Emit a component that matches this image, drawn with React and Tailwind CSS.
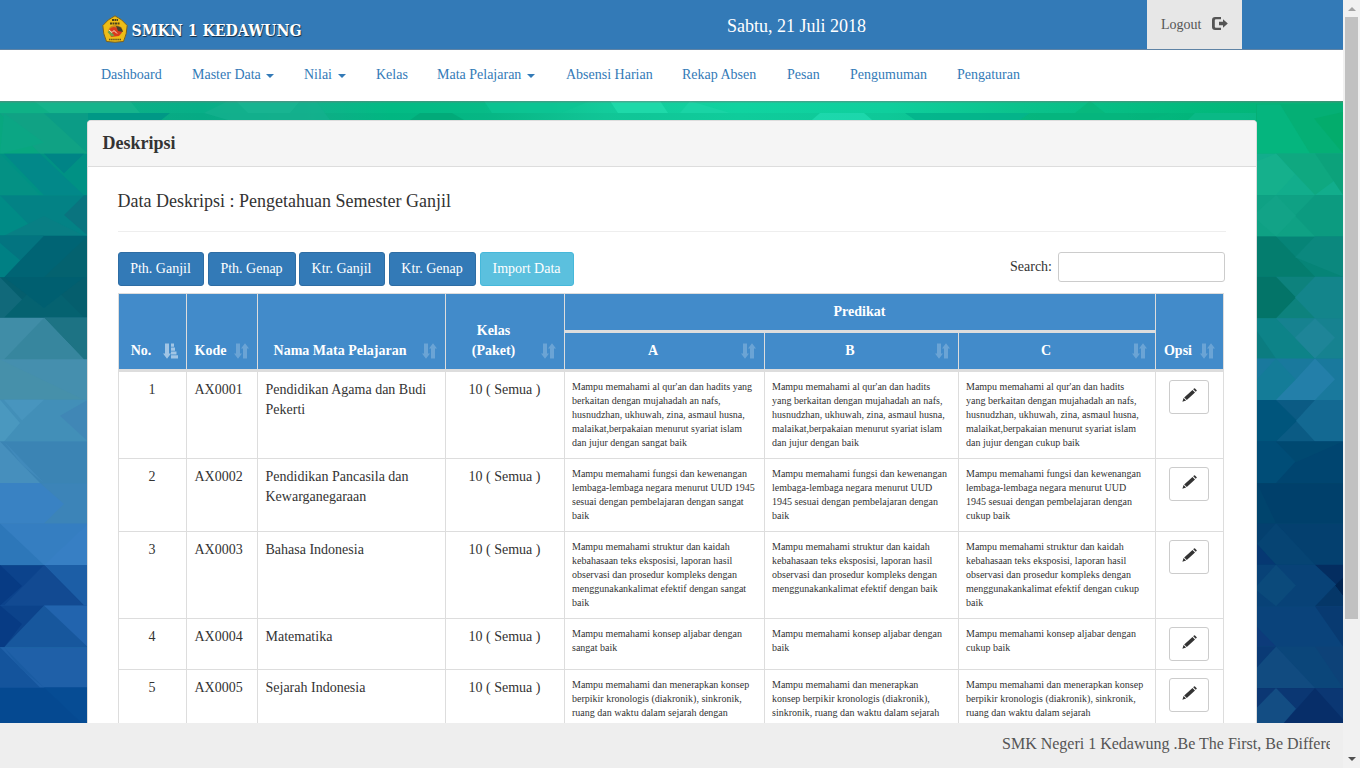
import React from 'react';

const NAV = [
  ['Dashboard', false, 'ml-[101px] w-[91px]'],
  ['Master Data', true, 'w-[112px]'],
  ['Nilai', true, 'w-[72px]'],
  ['Kelas', false, 'w-[61px]'],
  ['Mata Pelajaran', true, 'w-[129px]'],
  ['Absensi Harian', false, 'w-[116px]'],
  ['Rekap Absen', false, 'w-[105px]'],
  ['Pesan', false, 'w-[63px]'],
  ['Pengumuman', false, 'w-[107px]'],
  ['Pengaturan', false, 'w-[70px]'],
];

const BUTTONS = [
  ['Pth. Ganjil', 'w-[86px] bg-[#337ab7] border-[#2e6da4]'],
  ['Pth. Genap', 'w-[88px] bg-[#337ab7] border-[#2e6da4]'],
  ['Ktr. Ganjil', 'w-[86px] bg-[#337ab7] border-[#2e6da4] -ml-px'],
  ['Ktr. Genap', 'w-[87px] bg-[#337ab7] border-[#2e6da4]'],
  ['Import Data', 'w-[94px] bg-[#5bc0de] border-[#46b8da]'],
];

const ROWS = [
  {
    h: 'h-[88px]',
    code: 'AX0001',
    name: ['Pendidikan Agama dan Budi', 'Pekerti'],
    a: ["Mampu memahami al qur'an dan hadits yang", 'berkaitan dengan mujahadah an nafs,', 'husnudzhan, ukhuwah, zina, asmaul husna,', 'malaikat,berpakaian menurut syariat islam', 'dan jujur dengan sangat baik'],
    b: ["Mampu memahami al qur'an dan hadits", 'yang berkaitan dengan mujahadah an nafs,', 'husnudzhan, ukhuwah, zina, asmaul husna,', 'malaikat,berpakaian menurut syariat islam', 'dan jujur dengan baik'],
    c: ["Mampu memahami al qur'an dan hadits", 'yang berkaitan dengan mujahadah an nafs,', 'husnudzhan, ukhuwah, zina, asmaul husna,', 'malaikat,berpakaian menurut syariat islam', 'dan jujur dengan cukup baik'],
  },
  {
    h: 'h-[73px]',
    code: 'AX0002',
    name: ['Pendidikan Pancasila dan', 'Kewarganegaraan'],
    a: ['Mampu memahami fungsi dan kewenangan', 'lembaga-lembaga negara menurut UUD 1945', 'sesuai dengan pembelajaran dengan sangat', 'baik'],
    b: ['Mampu memahami fungsi dan kewenangan', 'lembaga-lembaga negara menurut UUD', '1945 sesuai dengan pembelajaran dengan', 'baik'],
    c: ['Mampu memahami fungsi dan kewenangan', 'lembaga-lembaga negara menurut UUD', '1945 sesuai dengan pembelajaran dengan', 'cukup baik'],
  },
  {
    h: 'h-[87px]',
    code: 'AX0003',
    name: ['Bahasa Indonesia'],
    a: ['Mampu memahami struktur dan kaidah', 'kebahasaan teks eksposisi, laporan hasil', 'observasi dan prosedur kompleks dengan', 'menggunakankalimat efektif dengan sangat', 'baik'],
    b: ['Mampu memahami struktur dan kaidah', 'kebahasaan teks eksposisi, laporan hasil', 'observasi dan prosedur kompleks dengan', 'menggunakankalimat efektif dengan baik'],
    c: ['Mampu memahami struktur dan kaidah', 'kebahasaan teks eksposisi, laporan hasil', 'observasi dan prosedur kompleks dengan', 'menggunakankalimat efektif dengan cukup', 'baik'],
  },
  {
    h: 'h-[51px]',
    code: 'AX0004',
    name: ['Matematika'],
    a: ['Mampu memahami konsep aljabar dengan', 'sangat baik'],
    b: ['Mampu memahami konsep aljabar dengan', 'baik'],
    c: ['Mampu memahami konsep aljabar dengan', 'cukup baik'],
  },
  {
    h: 'h-[87px]',
    code: 'AX0005',
    name: ['Sejarah Indonesia'],
    a: ['Mampu memahami dan menerapkan konsep', 'berpikir kronologis (diakronik), sinkronik,', 'ruang dan waktu dalam sejarah dengan'],
    b: ['Mampu memahami dan menerapkan', 'konsep berpikir kronologis (diakronik),', 'sinkronik, ruang dan waktu dalam sejarah'],
    c: ['Mampu memahami dan menerapkan konsep', 'berpikir kronologis (diakronik), sinkronik,', 'ruang dan waktu dalam sejarah'],
  },
];

/* Background facets: [top, height, base colour, [[points, colour], ...]] */
const LEFT = [
  [109, 33, '#10a284', [['0,109 0,142 40,142', '#08a77f'], ['44,109 88,109 88,142', '#0b9c86'], ['4,109 44,133 0,142', '#0ba684']]],
  [142, 34, '#009184', [['4,142 44,176 84,176 40,142', '#028889'], ['44,142 64,158 84,142', '#008486'], ['0,142 40,176 0,176', '#049184']]],
  [176, 33, '#038285', [['0,176 0,209 40,209', '#008b86'], ['84,176 64,192 88,209 88,176', '#0a747f'], ['44,193 4,209 84,209', '#087f84']]],
  [209, 34, '#006474', [['0,209 44,209 4,243 0,243', '#037480'], ['0,215 20,229 4,243 0,243', '#008084'], ['88,209 44,243 88,243', '#04626f']]],
  [243, 33, '#055e6d', [['0,243 0,276 40,276', '#11697a'], ['44,243 84,276 4,276', '#056270'], ['4,243 84,243 44,268', '#005f70']]],
  [276, 34, '#408da7', [['44,276 88,276 88,310 84,310', '#1d7384'], ['44,276 84,310 4,310', '#37869e']]],
  [310, 33, '#458fae', [['0,310 0,343 84,343', '#4690aa']]],
  [343, 34, '#428fb8', [['0,343 20,362 4,377 0,377', '#4a98bf'], ['88,343 60,356 88,377', '#4087b6'], ['4,343 44,343 22,360', '#4895be']]],
  [377, 34, '#3b84b4', [['0,377 0,411 40,411', '#468fbd'], ['4,377 44,411 22,396', '#418abb']]],
  [411, 33, '#3c84b8', [['0,411 40,411 64,428 44,444 0,444', '#3982c3']]],
  [444, 34, '#357ec1', [['0,444 0,478 44,478', '#2d77b9'], ['88,444 44,478 88,478', '#377fc4']]],
  [478, 33, '#0c438c', [['44,478 88,478 88,511 84,511', '#1c5ea6'], ['44,478 4,511 84,511', '#124a92'], ['0,478 22,495 0,511', '#073b84']]],
  [511, 34, '#17579d', [['0,511 44,511 4,545 0,545', '#0c438b'], ['0,511 22,526 4,545 0,545', '#073b84'], ['88,511 44,511 88,545', '#2264ae']]],
  [545, 33, '#1f60a8', [['0,545 0,578 40,578', '#14549c'], ['4,545 44,578 20,562', '#1a5ca3']]],
  [578, 34, '#054991', [['44,578 88,578 88,612', '#064c94']]],
];

const RIGHT = [
  [101, 38, '#05af75', [['1257,101 1280,101 1310,139 1257,139', '#05b57e'], ['1314,112 1343,107 1343,139', '#03ac6c']]],
  [139, 32, '#12ad8c', [['1276,139 1343,139 1343,155 1315,171', '#0fa880'], ['1315,139 1343,139 1343,171', '#0ca27b'], ['1257,145 1276,139 1295,155 1276,171 1257,171', '#15b08c']]],
  [171, 32, '#0fa184', [['1295,187 1315,171 1343,171 1343,203 1315,203', '#0c9b80'], ['1276,171 1296,187 1276,203 1257,190 1257,184', '#12a387']]],
  [203, 31, '#068477', [['1276,203 1315,234 1257,234 1257,203', '#047d6e'], ['1315,203 1343,203 1343,234 1295,219', '#0b887e']]],
  [234, 32, '#0d827d', [['1257,234 1276,234 1296,250 1276,266 1257,266', '#037468'], ['1315,234 1343,234 1343,266 1315,266 1295,250', '#13858b']]],
  [266, 31, '#0d8388', [['1276,266 1343,266 1343,297 1315,297', '#168290'], ['1315,266 1335,281 1315,297 1295,281', '#1e8598'], ['1257,276 1276,297 1257,297', '#0b7c80']]],
  [297, 32, '#19799d', [['1257,313 1276,297 1315,329 1257,329', '#147c98'], ['1315,297 1335,313 1315,329 1276,329 1296,313', '#237fa9']]],
  [329, 32, '#0b5b84', [['1257,329 1276,329 1297,345 1276,361 1257,361', '#00557c'], ['1315,329 1343,329 1343,361 1315,361 1296,345', '#136992']]],
  [361, 32, '#004570', [['1257,361 1276,361 1296,376 1276,393 1257,393', '#004d77'], ['1276,361 1343,361 1296,377', '#004971']]],
  [393, 31, '#00406b', [['1257,393 1276,424 1257,424', '#00446d']]],
  [424, 32, '#04406f', [['1276,424 1315,456 1276,456 1257,440', '#064473'], ['1257,440 1276,456 1257,456', '#063872']]],
  [456, 32, '#084277', [['1315,456 1343,456 1343,476', '#042d60'], ['1257,472 1276,456 1296,472 1276,488 1257,476', '#0b4a7b'], ['1335,472 1343,466 1343,480', '#002450'], ['1315,488 1335,472 1343,480 1343,488', '#053768']]],
  [488, 31, '#0a437b', [['1315,488 1343,488 1343,519', '#083a71'], ['1257,504 1257,519 1276,519', '#0d3b7a']]],
  [519, 32, '#0b467a', [['1257,535 1276,519 1315,551 1257,551', '#114b80'], ['1257,519 1276,519 1257,535', '#0a3a75'], ['1315,519 1343,519 1343,551', '#0d4278']]],
  [551, 34, '#0b3773', [['1257,566 1276,551 1296,567 1276,585 1257,578', '#134d83'], ['1315,551 1343,575 1343,585 1276,585', '#072e69']]],
];

const TOP = [
  ['0,0 34,0 50,12 0,12', '#0fb186'],
  ['34,0 130,0 140,12 50,12', '#18b58d'],
  ['228,0 204,12 228,19 330,19 316,0', '#14b08d'],
  ['236,0 300,0 290,12 248,12', '#1ab592'],
  ['420,12 452,12 464,19 410,19', '#02a877'],
  ['484,0 492,12 560,12 590,0', '#0dc493'],
  ['610,0 660,0 668,12 618,12', '#22dcad'],
  ['690,0 730,12 680,12', '#1cd5a6'],
  ['820,12 864,12 872,19 812,19', '#20dbb0'],
  ['905,12 1030,12 1020,19 915,19', '#02b18b'],
  ['1030,12 1170,12 1150,19 1020,19', '#05b47c'],
  ['1090,0 1105,12 1075,12', '#08b67a'],
  ['1195,12 1257,12 1257,19 1188,19', '#0dba89'],
];

function Facets({ rows, x, w }) {
  return rows.map(([y, h, fill, tris]) => (
    <g key={y}>
      <rect x={x} y={y} width={w} height={h + 0.5} fill={fill} />
      {tris.map(([points, color]) => (
        <polygon key={points} points={points} fill={color} />
      ))}
    </g>
  ));
}

function Backdrop() {
  return (
    <svg className="absolute inset-0 h-full w-full" viewBox="0 0 1343 622" preserveAspectRatio="none">
      <defs>
        <linearGradient id="top" x1="0" x2="1343" y1="0" y2="0" gradientUnits="userSpaceOnUse">
          <stop offset="0" stopColor="#12b188" />
          <stop offset="0.15" stopColor="#07af87" />
          <stop offset="0.22" stopColor="#13b08c" />
          <stop offset="0.29" stopColor="#02bb84" />
          <stop offset="0.36" stopColor="#07bb87" />
          <stop offset="0.45" stopColor="#13cb9b" />
          <stop offset="0.55" stopColor="#10d3a0" />
          <stop offset="0.66" stopColor="#0fcf9d" />
          <stop offset="0.76" stopColor="#0bc28c" />
          <stop offset="0.9" stopColor="#02b97c" />
          <stop offset="1" stopColor="#05b074" />
        </linearGradient>
      </defs>
      <rect width="1343" height="622" fill="url(#top)" />
      <rect y="12" width="1257" height="8" fill="#006a50" fillOpacity="0.06" />
      <polygon points="85,12 170,12 160,20 85,20" fill="#009886" />
      {TOP.map(([points, color]) => (
        <polygon key={points} points={points} fill={color} fillOpacity="0.8" />
      ))}
      <g transform="translate(0,-11) scale(1,1.2245) translate(0,-90)">
        <Facets rows={LEFT} x={0} w={88} />
      </g>
      <g transform="translate(0,-11) scale(1,1.2972) translate(0,-90)">
        <Facets rows={RIGHT} x={1256} w={87} />
      </g>
    </svg>
  );
}

function SortIcon() {
  return (
    <svg className="absolute right-[8px] bottom-[10px] h-[16px] w-[15px]" viewBox="0 0 15 16" fill="#fff" fillOpacity="0.22">
      <path d="M2 .5h4v10h2L4 15.700 0 10.500h2z" />
      <path d="M9 15.500V5.500H7L11 .3l4 5.200h-2v10z" />
    </svg>
  );
}

function SortAscIcon() {
  return (
    <svg className="absolute right-[8px] bottom-[10px] h-[16px] w-[15px]" viewBox="0 0 15 16" fill="#fff" fillOpacity="0.5">
      <path d="M2 .5h4v10h2L4 15.700 0 10.500h2z" />
      <path d="M8 .5h3v3.200H8zM8 4.500h4v3.200H8zM8 8.400h5.500v3.200H8zM8 12.300h7v3.200H8z" />
    </svg>
  );
}

function Pencil() {
  return (
    <svg className="h-[14px] w-[15px]" viewBox="0 0 15 14" fill="#333">
      <path d="M11.200 1.200 12 .4q.5-.5 1 0L14.500 2q.5.500 0 1l-.8.800zM10.500 1.900l2.500 2.600L4.800 12 2.200 9.400zM1.600 10.100l2.500 2.500L.4 13.800z" />
    </svg>
  );
}

function Crest() {
  return (
    <svg className="h-[28px] w-[26px] shrink-0" viewBox="0 0 26 28">
      <path d="M13 .8Q20 4 25.200 10.500 25 19 21.500 26.500 13 28 4.500 26.500 1 19 .8 10.500 6 4 13 .8z" fill="#eebd16" stroke="#745f25" strokeWidth="1" strokeLinejoin="round" />
      <path d="M10 5h6M8 8.500h10" stroke="#4c421c" strokeWidth="1.800" strokeDasharray="2 .5" />
      <ellipse cx="13.500" cy="15.500" rx="7" ry="5.500" fill="#c98a1c" />
      <path d="M7 15q3-5 8-2l5 4-3 4-8 1z" fill="#d93a1e" />
      <path d="M14 11q6 0 7 6l-5-1z" fill="#49402b" />
      <path d="m5.500 17 4 4.500 3-1-5-5z" fill="#6ea04a" />
      <path d="m7 15 3 2.500 2-2 3 3" fill="none" stroke="#fbe8cf" strokeWidth="1" />
      <path d="M7 24.500h12" stroke="#635321" strokeWidth="1.500" strokeDasharray="1.500 .6" />
    </svg>
  );
}

function Th({ children, className = '', icon, ...rest }) {
  return (
    <th {...rest} className={'relative border border-b-[3px] border-[#ddd] bg-[#428bca] px-0 pt-0 pb-[8px] text-center align-bottom leading-[20px] font-bold text-white ' + className}>
      {children}
      {icon}
    </th>
  );
}

function Desc({ lines }) {
  return (
    <td className="border border-[#ddd] p-0 pt-[8px] pl-[7px] align-top text-[10px] leading-[14px] whitespace-nowrap">
      {lines.map((l) => (
        <div key={l}>{l}</div>
      ))}
    </td>
  );
}

function Scrollbar() {
  return (
    <div className="flex w-[17px] shrink-0 flex-col items-center bg-[#f1f1f1]">
      <div className="flex h-[17px] items-center">
        <span className="h-0 w-0 border-x-4 border-b-4 border-x-transparent border-b-[#a3a3a3]" />
      </div>
      <div className="h-[602px] w-[13px] bg-[#c1c1c1]" />
      <div className="mt-auto flex h-[19px] items-center">
        <span className="h-0 w-0 border-x-4 border-t-4 border-x-transparent border-t-[#505050]" />
      </div>
    </div>
  );
}

function DescriptionTable() {
  return (
    <table className="w-[1106px] table-fixed border-collapse">
      <colgroup>
        <col className="w-[68px]" />
        <col className="w-[71px]" />
        <col className="w-[188px]" />
        <col className="w-[119px]" />
        <col className="w-[200px]" />
        <col className="w-[194px]" />
        <col className="w-[197px]" />
        <col className="w-[68px]" />
      </colgroup>
      <thead>
        <tr className="h-[38px]">
          <Th rowSpan={2} className="pr-[23px]" icon={<SortAscIcon />}>No.</Th>
          <Th rowSpan={2} className="pr-[23px]" icon={<SortIcon />}>Kode</Th>
          <Th rowSpan={2} className="pr-[23px]" icon={<SortIcon />}>Nama Mata Pelajaran</Th>
          <Th rowSpan={2} className="pr-[23px]" icon={<SortIcon />}>Kelas<br />(Paket)</Th>
          <Th colSpan={3} className="pr-[1px]">Predikat</Th>
          <Th rowSpan={2} className="pr-[23px]" icon={<SortIcon />}>Opsi</Th>
        </tr>
        <tr className="h-[39px]">
          <Th className="pr-[23px]" icon={<SortIcon />}>A</Th>
          <Th className="pr-[23px]" icon={<SortIcon />}>B</Th>
          <Th className="pr-[22px]" icon={<SortIcon />}>C</Th>
        </tr>
      </thead>
      <tbody>
        {ROWS.map((r, i) => (
          <tr key={r.code} className={r.h}>
            <td className="border border-[#ddd] p-0 pt-[8px] pr-px text-center align-top">{i + 1}</td>
            <td className="border border-[#ddd] p-0 pt-[8px] pl-[7.5px] align-top">{r.code}</td>
            <td className="border border-[#ddd] p-0 pt-[8px] pl-[7.5px] align-top whitespace-nowrap">
              {r.name.map((n) => (
                <div key={n}>{n}</div>
              ))}
            </td>
            <td className="border border-[#ddd] p-0 pt-[8px] pr-px text-center align-top">10 ( Semua )</td>
            <Desc lines={r.a} />
            <Desc lines={r.b} />
            <Desc lines={r.c} />
            <td className="border border-[#ddd] p-0 pt-[8px] align-top">
              <button className="ml-[13px] flex h-[34px] w-[40px] justify-center rounded-[3px] border border-[#ccc] bg-white pt-[7px]">
                <Pencil />
              </button>
            </td>
          </tr>
        ))}
      </tbody>
    </table>
  );
}

export default function App() {
  return (
    <div className="flex h-[768px] w-[1360px] overflow-hidden bg-white font-['Liberation_Serif',serif] text-[14px] leading-[20px] text-[#333]">
      <div className="flex w-[1343px] shrink-0 flex-col">
        <header className="flex h-[50px] shrink-0 border-b border-[#5f83a5] bg-[#337ab7]">
          <div className="ml-[102px] flex w-[625px] items-start pt-[15px]">
            <Crest />
            <svg className="-mt-[3px] ml-[3px] h-[34px] w-[180px] overflow-visible" viewBox="0 0 180 34">
              <g className="font-['DejaVu_Serif',serif] text-[17.5px] font-bold">
                <text x="0.500" y="24" textLength="170" lengthAdjust="spacingAndGlyphs" fill="#fff" className="[text-shadow:1px_1px_1px_#142c44]">SMKN 1 KEDAWUNG</text>
              </g>
            </svg>
          </div>
          <div className="w-[420px] pt-[16px] text-[18px] text-white">Sabtu, 21 Juli 2018</div>
          <div className="flex w-[95px] bg-[#e7e7e7] pt-[15px] pl-[14px] text-[#555]">
            <span className="w-[51px]">Logout</span>
            <svg className="mt-[2px] h-[14px] w-[16px]" viewBox="0 0 16 14" fill="#555">
              <path d="M9 0v2.300H4Q2.800 2.300 2.800 3.300v6.400q0 1 1.200 1H9V13H3.200Q0 13 0 10V3Q0 0 3.200 0z" />
              <path d="M7 4.700h4V2.200l4.800 4.300L11 10.800V8.300H7z" />
            </svg>
          </div>
        </header>

        <nav className="flex h-[51px] shrink-0 bg-white pt-[15px] whitespace-nowrap text-[#337ab7]">
          {NAV.map(([label, caret, cls]) => (
            <a key={label} className={'flex shrink-0 ' + cls}>
              {label}
              {caret && <span className="mt-[9px] ml-[5.5px] h-0 w-0 border-x-4 border-t-4 border-x-transparent border-t-[#337ab7]" />}
            </a>
          ))}
        </nav>

        <main className="relative h-[622px] shrink-0 overflow-hidden">
          <Backdrop />
          <div className="absolute inset-x-0 top-0 h-[2px] bg-linear-to-b from-[#777]/60 to-[#777]/10" />
          <section className="relative mt-[19px] ml-[87px] h-[603px] w-[1170px] overflow-hidden rounded-t-[4px] border border-b-0 border-[#ddd] bg-white">
            <div className="h-[46px] rounded-t-[3px] border-b border-[#ddd] bg-[#f5f5f5] pt-[12px] pl-[14.5px] text-[18px] font-bold">Deskripsi</div>
            <div className="px-[30px]">
              <h2 className="h-[65px] w-[1108px] border-b border-[#eee] pt-[24px] text-[18px]">
                <span className="-ml-[0.5px]">Data Deskripsi : Pengetahuan Semester Ganjil</span>
              </h2>
              <div className="mt-[20px] flex h-[41px] w-[1107px] justify-between">
                <div className="flex gap-[4px]">
                  {BUTTONS.map(([label, cls]) => (
                    <button key={label} className={'h-[34px] rounded-[3px] border pr-px text-center whitespace-nowrap text-white ' + cls}>{label}</button>
                  ))}
                </div>
                <label className="flex">
                  <span className="mt-[5px] mr-[6px]">Search:</span>
                  <input className="h-[30px] w-[167px] rounded-[3px] border border-[#ccc] bg-white" />
                </label>
              </div>
              <DescriptionTable />
            </div>
          </section>
        </main>

        <footer className="flex h-[45px] shrink-0 bg-[#eee] pt-[11px] pl-[1002px] text-[16px] text-[#555]">
          <div className="w-[328px] overflow-hidden whitespace-nowrap">SMK Negeri 1 Kedawung .Be The First, Be Differe</div>
        </footer>
      </div>
      <Scrollbar />
    </div>
  );
}
